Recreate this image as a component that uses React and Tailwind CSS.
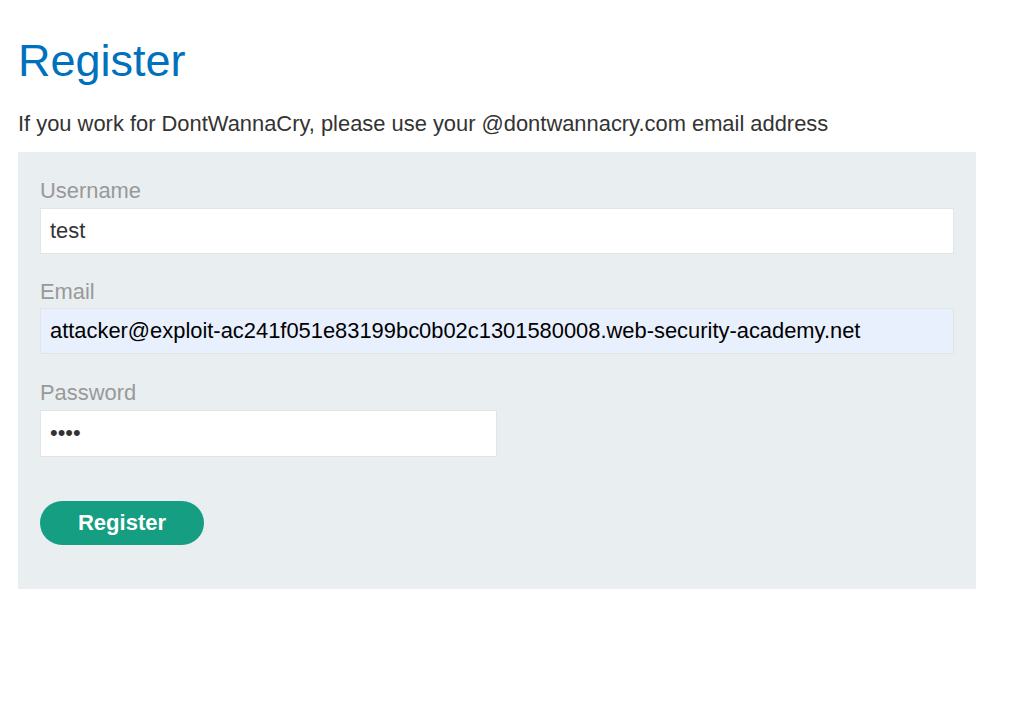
export default function App() {
  return (
    <div className="min-h-screen bg-white px-[18px] pt-[34px] font-['Liberation_Sans',Arial,sans-serif]">
      <h1 className="text-[45px] leading-[1.2] text-[#0071bc]">Register</h1>
      <p className="mt-[22px] text-[21.9px] leading-[1.3] text-[#333333]">
        If you work for DontWannaCry, please use your @dontwannacry.com email address
      </p>
      <form className="mt-[14px] w-[958px] bg-[#e9eef1] px-[22px] pb-[44px] pt-[25px]">
        <label className="block text-[21.9px] leading-[1.3] text-[#999999]">Username</label>
        <input
          type="text"
          defaultValue="test"
          className="mt-[2px] block h-[46px] w-full border border-[#e2e4e6] bg-white px-[9px] text-[21.9px] text-[#333333] outline-none"
        />
        <label className="mt-[24px] block text-[21.9px] leading-[1.3] text-[#999999]">Email</label>
        <input
          type="text"
          defaultValue="attacker@exploit-ac241f051e83199bc0b02c1301580008.web-security-academy.net"
          className="mt-[2px] block h-[46px] w-full border border-[#e2e4e6] bg-[#e8f0fe] px-[9px] text-[21.9px] text-black outline-none"
        />
        <label className="mt-[25px] block text-[21.9px] leading-[1.3] text-[#999999]">Password</label>
        <input
          type="password"
          defaultValue="test"
          className="mt-[2px] block h-[47px] w-[457px] border border-[#e2e4e6] bg-white px-[9px] text-[21.9px] text-[#333333] outline-none"
        />
        <button
          type="button"
          className="mt-[44px] block h-[44px] w-[164px] rounded-[24px] bg-[#169e82] text-[22px] font-bold text-white"
        >
          Register
        </button>
      </form>
    </div>
  );
}
